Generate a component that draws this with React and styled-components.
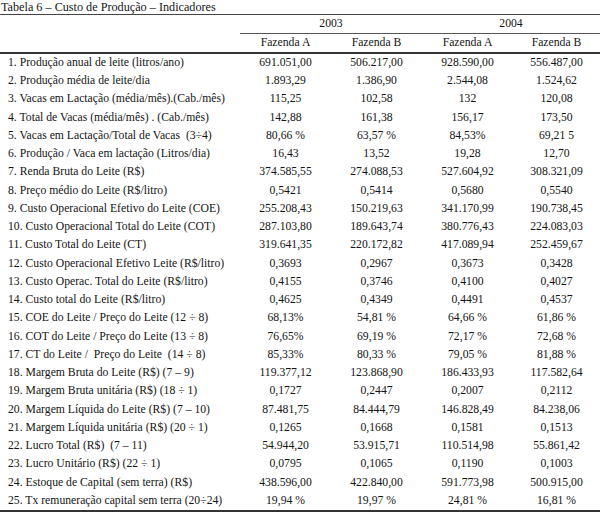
import React from "react";
import styled, { createGlobalStyle } from "styled-components";

const Global = createGlobalStyle`
  html, body { margin: 0; padding: 0; background: #fff; }
  body { font-family: "Liberation Serif", "Times New Roman", serif; color: #151515; }
`;

const Page = styled.div`
  width: 600px;
  height: 514px;
  overflow: hidden;
  background: #fff;
`;

const Title = styled.div`
  font-size: 12.2px;
  line-height: 14px;
  height: 14px;
  padding-left: 1px;
  white-space: nowrap;
`;

const Table = styled.table`
  width: 600px;
  border-collapse: collapse;
  table-layout: fixed;
  font-size: 11.7px;
  border-top: 1.5px solid #444;
  border-bottom: 2px solid #333;
`;

const HeadRow = styled.tr`
  height: 19px;
`;

const YearCell = styled.th`
  font-weight: normal;
  text-align: center;
  padding: 0;
  border-bottom: 1px solid #555;
  line-height: 18px;
`;

const FarmCell = styled.th`
  font-weight: normal;
  text-align: center;
  padding: 0;
  border-bottom: 2px solid #333;
  line-height: 18px;
`;

const BlankHead = styled.th`
  padding: 0;
  border-bottom: ${(p) => (p.$last ? "2px solid #333" : "none")};
`;

const BodyRow = styled.tr`
  height: 18.25px;
`;

const Label = styled.td`
  padding: 0 0 0 8px;
  white-space: pre;
  line-height: 18px;
`;

const Value = styled.td`
  padding: 0;
  text-align: center;
  white-space: nowrap;
  line-height: 18px;
`;

const rows = [
  ["1. Produção anual de leite (litros/ano)", "691.051,00", "506.217,00", "928.590,00", "556.487,00"],
  ["2. Produção média de leite/dia", "1.893,29", "1.386,90", "2.544,08", "1.524,62"],
  ["3. Vacas em Lactação (média/mês).(Cab./mês)", "115,25", "102,58", "132", "120,08"],
  ["4. Total de Vacas (média/mês) . (Cab./mês)", "142,88", "161,38", "156,17", "173,50"],
  ["5. Vacas em Lactação/Total de Vacas  (3÷4)", "80,66 %", "63,57 %", "84,53%", "69,21 5"],
  ["6. Produção / Vaca em lactação (Litros/dia)", "16,43", "13,52", "19,28", "12,70"],
  ["7. Renda Bruta do Leite (R$)", "374.585,55", "274.088,53", "527.604,92", "308.321,09"],
  ["8. Preço médio do Leite (R$/litro)", "0,5421", "0,5414", "0,5680", "0,5540"],
  ["9. Custo Operacional Efetivo do Leite (COE)", "255.208,43", "150.219,63", "341.170,99", "190.738,45"],
  ["10. Custo Operacional Total do Leite (COT)", "287.103,80", "189.643,74", "380.776,43", "224.083,03"],
  ["11. Custo Total do Leite (CT)", "319.641,35", "220.172,82", "417.089,94", "252.459,67"],
  ["12. Custo Operacional Efetivo Leite (R$/litro)", "0,3693", "0,2967", "0,3673", "0,3428"],
  ["13. Custo Operac. Total do Leite (R$/litro)", "0,4155", "0,3746", "0,4100", "0,4027"],
  ["14. Custo total do Leite (R$/litro)", "0,4625", "0,4349", "0,4491", "0,4537"],
  ["15. COE do Leite / Preço do Leite (12 ÷ 8)", "68,13%", "54,81 %", "64,66 %", "61,86 %"],
  ["16. COT do Leite / Preço do Leite (13 ÷ 8)", "76,65%", "69,19 %", "72,17 %", "72,68 %"],
  ["17. CT do Leite /  Preço do Leite  (14 ÷ 8)", "85,33%", "80,33 %", "79,05 %", "81,88 %"],
  ["18. Margem Bruta do Leite (R$) (7 – 9)", "119.377,12", "123.868,90", "186.433,93", "117.582,64"],
  ["19. Margem Bruta unitária (R$) (18 ÷ 1)", "0,1727", "0,2447", "0,2007", "0,2112"],
  ["20. Margem Líquida do Leite (R$) (7 – 10)", "87.481,75", "84.444,79", "146.828,49", "84.238,06"],
  ["21. Margem Líquida unitária (R$) (20 ÷ 1)", "0,1265", "0,1668", "0,1581", "0,1513"],
  ["22. Lucro Total (R$)  (7 – 11)", "54.944,20", "53.915,71", "110.514,98", "55.861,42"],
  ["23. Lucro Unitário (R$) (22 ÷ 1)", "0,0795", "0,1065", "0,1190", "0,1003"],
  ["24. Estoque de Capital (sem terra) (R$)", "438.596,00", "422.840,00", "591.773,98", "500.915,00"],
  ["25. Tx remuneração capital sem terra (20÷24)", "19,94 %", "19,97 %", "24,81 %", "16,81 %"],
];

export default function App() {
  return (
    <Page>
      <Global />
      <Title>Tabela 6 – Custo de Produção – Indicadores</Title>
      <Table>
        <colgroup>
          <col style={{ width: 240 }} />
          <col style={{ width: 91 }} />
          <col style={{ width: 91 }} />
          <col style={{ width: 91 }} />
          <col style={{ width: 87 }} />
        </colgroup>
        <thead>
          <HeadRow>
            <BlankHead />
            <YearCell colSpan={2}>2003</YearCell>
            <YearCell colSpan={2}>2004</YearCell>
          </HeadRow>
          <HeadRow>
            <BlankHead $last />
            <FarmCell>Fazenda A</FarmCell>
            <FarmCell>Fazenda B</FarmCell>
            <FarmCell>Fazenda A</FarmCell>
            <FarmCell>Fazenda B</FarmCell>
          </HeadRow>
        </thead>
        <tbody>
          {rows.map((r) => (
            <BodyRow key={r[0]}>
              <Label>{r[0]}</Label>
              {r.slice(1).map((v, i) => (
                <Value key={i}>{v}</Value>
              ))}
            </BodyRow>
          ))}
        </tbody>
      </Table>
    </Page>
  );
}
